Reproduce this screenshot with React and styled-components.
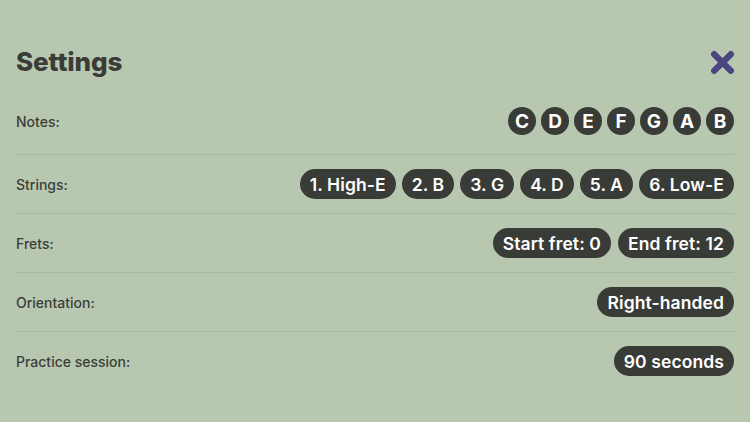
import React from "react";
import styled, { createGlobalStyle } from "styled-components";

const Global = createGlobalStyle`
  html, body { margin: 0; padding: 0; background: #b8c8b0; }
  body { font-family: Inter, "Noto Sans", "Liberation Sans", sans-serif; -webkit-font-smoothing: antialiased; }
`;

const Page = styled.div`
  width: 750px;
  height: 422px;
  box-sizing: border-box;
  padding: 40px 16px 0 16px;
  background: #b8c8b0;
  overflow: hidden;
`;

const Header = styled.div`
  display: flex;
  align-items: center;
  justify-content: space-between;
  height: 44px;
  margin-bottom: 8px;
`;

const Title = styled.h1`
  margin: 0;
  font-size: 26px;
  line-height: 44px;
  font-weight: 800;
  color: #393c37;
  letter-spacing: -0.1px;
`;

const CloseButton = styled.button`
  border: 0;
  background: none;
  padding: 0;
  margin-right: -1px;
  width: 25px;
  height: 25px;
  display: flex;
  align-items: center;
  justify-content: center;
  cursor: pointer;
`;

const Row = styled.div`
  display: flex;
  align-items: center;
  justify-content: space-between;
  padding: ${(p) => (p.$first ? "15px 0 19px" : "14px 0")};
  border-bottom: ${(p) => (p.$last ? "0" : "1px solid rgba(60, 80, 55, 0.12)")};
`;

const Label = styled.span`
  font-size: 14px;
  font-weight: 500;
  color: #3b3f39;
`;

const Group = styled.div`
  display: flex;
  align-items: center;
  gap: ${(p) => p.$gap || 7}px;
`;

const Pill = styled.span`
  display: inline-flex;
  align-items: center;
  height: 30px;
  padding: 0 10px;
  border-radius: 15px;
  background: #393b37;
  color: #ffffff;
  font-size: 17.5px;
  font-weight: 600;
  letter-spacing: 0.1px;
  white-space: nowrap;
`;

const Note = styled.span`
  display: inline-flex;
  align-items: center;
  justify-content: center;
  width: 28px;
  height: 28px;
  border-radius: 50%;
  background: #393b37;
  color: #ffffff;
  font-size: 19px;
  font-weight: 700;
`;

const notes = ["C", "D", "E", "F", "G", "A", "B"];
const strings = ["1. High-E", "2. B", "3. G", "4. D", "5. A", "6. Low-E"];

export default function App() {
  return (
    <>
      <Global />
      <Page>
        <Header>
          <Title>Settings</Title>
          <CloseButton aria-label="Close">
            <svg width="25" height="25" viewBox="0 0 24 24">
              <path
                d="M4 4 L20 20 M20 4 L4 20"
                stroke="#4b4682"
                strokeWidth="6"
                strokeLinecap="round"
                fill="none"
              />
            </svg>
          </CloseButton>
        </Header>
        <Row $first>
          <Label>Notes:</Label>
          <Group $gap={5}>
            {notes.map((n) => (
              <Note key={n}>{n}</Note>
            ))}
          </Group>
        </Row>
        <Row>
          <Label>Strings:</Label>
          <Group $gap={6}>
            {strings.map((s) => (
              <Pill key={s}>{s}</Pill>
            ))}
          </Group>
        </Row>
        <Row>
          <Label>Frets:</Label>
          <Group>
            <Pill>Start fret: 0</Pill>
            <Pill>End fret: 12</Pill>
          </Group>
        </Row>
        <Row>
          <Label>Orientation:</Label>
          <Group>
            <Pill>Right-handed</Pill>
          </Group>
        </Row>
        <Row $last>
          <Label>Practice session:</Label>
          <Group>
            <Pill>90 seconds</Pill>
          </Group>
        </Row>
      </Page>
    </>
  );
}
